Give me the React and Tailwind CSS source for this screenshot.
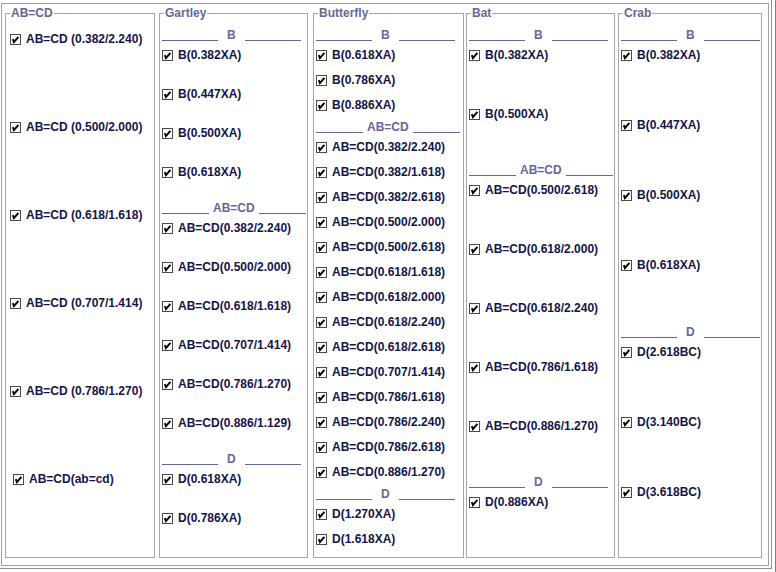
import React from 'react';

const FONT = "font-['Liberation_Sans',Arial,sans-serif]";
const SOFT = '#66669a';

// '#' prefix marks a separator row
const columns = [
  {
    title: 'AB=CD',
    w: 'w-[150px]', ml: 'ml-[3px]', pt: 'pt-[11px]', pl: 'pl-[4px]', rowH: 'h-[88px]',
    rows: ['AB=CD (0.382/2.240)', 'AB=CD (0.500/2.000)', 'AB=CD (0.618/1.618)', 'AB=CD (0.707/1.414)', 'AB=CD (0.786/1.270)', '>AB=CD(ab=cd)'],
  },
  {
    title: 'Gartley',
    w: 'w-[149px]', ml: 'ml-[4px]', pt: 'pt-[10px]', pl: 'pl-[2px]', rowH: 'h-[39px]',
    rows: ['#B', 'B(0.382XA)', 'B(0.447XA)', 'B(0.500XA)', 'B(0.618XA)', '#AB=CD', 'AB=CD(0.382/2.240)', 'AB=CD(0.500/2.000)', 'AB=CD(0.618/1.618)', 'AB=CD(0.707/1.414)', 'AB=CD(0.786/1.270)', 'AB=CD(0.886/1.129)', '#D', 'D(0.618XA)', 'D(0.786XA)'],
  },
  {
    title: 'Butterfly',
    w: 'w-[151px]', ml: 'ml-[5px]', pt: 'pt-[10px]', pl: 'pl-[2px]', rowH: 'h-[25px]',
    rows: ['#B', 'B(0.618XA)', 'B(0.786XA)', 'B(0.886XA)', '#AB=CD', 'AB=CD(0.382/2.240)', 'AB=CD(0.382/1.618)', 'AB=CD(0.382/2.618)', 'AB=CD(0.500/2.000)', 'AB=CD(0.500/2.618)', 'AB=CD(0.618/1.618)', 'AB=CD(0.618/2.000)', 'AB=CD(0.618/2.240)', 'AB=CD(0.618/2.618)', 'AB=CD(0.707/1.414)', 'AB=CD(0.786/1.618)', 'AB=CD(0.786/2.240)', 'AB=CD(0.786/2.618)', 'AB=CD(0.886/1.270)', '#D', 'D(1.270XA)', 'D(1.618XA)'],
  },
  {
    title: 'Bat',
    w: 'w-[149px]', ml: 'ml-[2px]', pt: 'pt-[10px]', pl: 'pl-[2px]', rowH: 'h-[59px]',
    rows: ['#B', 'B(0.382XA)', 'B(0.500XA)', '#AB=CD', 'AB=CD(0.500/2.618)', 'AB=CD(0.618/2.000)', 'AB=CD(0.618/2.240)', 'AB=CD(0.786/1.618)', 'AB=CD(0.886/1.270)', '#D', 'D(0.886XA)'],
  },
  {
    title: 'Crab',
    w: 'w-[144px]', ml: 'ml-[3px]', pt: 'pt-[10px]', pl: 'pl-[2px]', rowH: 'h-[70px]',
    rows: ['#B', 'B(0.382XA)', 'B(0.447XA)', 'B(0.500XA)', 'B(0.618XA)', '#D', 'D(2.618BC)', 'D(3.140BC)', 'D(3.618BC)'],
  },
];

const Check = () => (
  <svg width="11" height="11" viewBox="0 0 11 11" className="shrink-0">
    <rect x="0.5" y="0.5" width="10" height="10" fill="#fff" stroke="#4a4a4a" />
    <polyline points="2.8,5.2 3.9,8.2 8.4,2.8" fill="none" stroke="#000" strokeWidth="1.9" />
  </svg>
);

const Item = ({ label, height }) => {
  const shifted = label.startsWith('>');
  return (
    <div className={`flex ${height} items-start`}>
      <div className={`flex h-[16px] items-center gap-[5px] ${shifted ? 'ml-[3px]' : ''}`}>
        <Check />
        <span className="whitespace-nowrap text-[12px] font-bold leading-[16px] text-[#14144a]">
          {shifted ? label.slice(1) : label}
        </span>
      </div>
    </div>
  );
};

const Sep = ({ text }) => {
  const wide = text.length > 1;
  const line = wide ? 'w-[47px]' : 'w-[56px]';
  return (
    <div className="flex h-[17px] items-start">
      <div className={`mt-[10px] h-px ${line} bg-[#66669a]`} />
      <span className={`${wide ? 'mx-[4px]' : 'mx-[9px]'} text-[12px] font-bold leading-[10px] text-[#66669a]`}>
        {text}
      </span>
      <div className={`mt-[10px] h-px ${line} bg-[#66669a]`} />
    </div>
  );
};

export default function App() {
  return (
    <div className={`h-[572px] w-[776px] bg-white ${FONT}`}>
      <div className="h-[572px] w-[776px] border-r border-[#808080]">
        <div className="h-[569px] w-[772px] border-b border-r border-[#909090] pl-[1px] pt-[3px]">
          <div className="flex h-[563px] w-[768px] items-start border border-[#a0a0a0]">
            {columns.map((col) => (
              <fieldset key={col.title} className={`${col.w} ${col.ml} mt-[2px] h-[552px] border border-[#a6a6a6]`}>
                <legend className="ml-[4px] px-[1px] text-[12px] font-bold leading-[14px] text-[#66669a]">
                  {col.title}
                </legend>
                <div className={`flex flex-col ${col.pt} ${col.pl}`}>
                  {col.rows.map((r, i) =>
                    r.startsWith('#') ? (
                      <Sep key={i} text={r.slice(1)} />
                    ) : (
                      <Item key={i} label={r} height={col.rowH} />
                    )
                  )}
                </div>
              </fieldset>
            ))}
          </div>
        </div>
      </div>
    </div>
  );
}
